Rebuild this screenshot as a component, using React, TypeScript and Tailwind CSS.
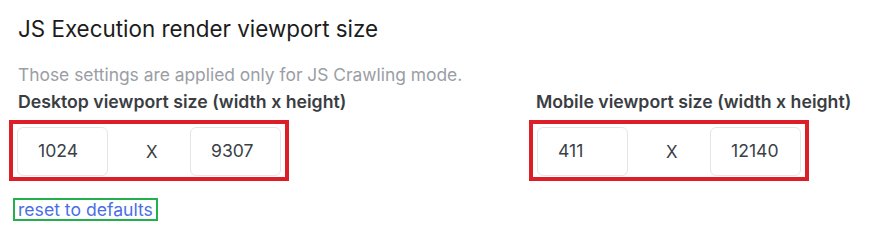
import React from "react";

function SizeInput({ value }: { value: string }) {
  return (
    <div className="w-[91px] h-[49px] shrink-0 border border-[#e3e5e8] rounded-[6px] bg-white flex items-center pl-[20px] text-[17.6px] text-[#3a3f47]">
      {value}
    </div>
  );
}

function SizeGroup({ w, h }: { w: string; h: string }) {
  return (
    <div className="w-[280px] border-[4px] border-[#dc1e28] pt-[3px] pb-[1px] px-[4px] flex items-center">
      <SizeInput value={w} />
      <div className="w-[82px] shrink-0 pl-[38px] text-[17px] text-[#3a3f47] leading-[20px]">X</div>
      <SizeInput value={h} />
    </div>
  );
}

export default function App() {
  return (
    <div
      className="w-[869px] h-[235px] bg-white overflow-hidden pl-[18px]"
      style={{ fontFamily: "Inter, 'Noto Sans', sans-serif" }}
    >
      <h1 className="pt-[14px] text-[22.4px] leading-[30px] text-[#1c1c1c] font-normal">
        JS Execution render viewport size
      </h1>
      <p className="mt-[18px] text-[17.4px] leading-[26px] text-[#9a9ea5]">
        Those settings are applied only for JS Crawling mode.
      </p>
      <div className="flex">
        <div className="w-[518px] shrink-0">
          <div className="mt-[1px] text-[17.7px] leading-[26px] font-semibold text-[#3a3d42]">
            Desktop viewport size (width x height)
          </div>
          <div className="mt-[5px] -ml-[9px]">
            <SizeGroup w="1024" h="9307" />
          </div>
        </div>
        <div>
          <div className="mt-[1px] text-[17.7px] leading-[26px] font-semibold text-[#3a3d42]">
            Mobile viewport size (width x height)
          </div>
          <div className="mt-[5px] -ml-[7px]">
            <SizeGroup w="411" h="12140" />
          </div>
        </div>
      </div>
      <div className="mt-[17px] -ml-[5px]">
        <a className="inline-block border-[2px] border-[#22b14c] px-[3px] text-[17.6px] leading-[19px] text-[#4a6ee6] cursor-pointer">
          reset to defaults
        </a>
      </div>
    </div>
  );
}
